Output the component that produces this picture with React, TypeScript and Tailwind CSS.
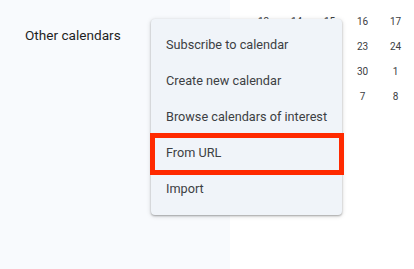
import React from "react";

const rows = [
  [6, 7, 8, 9, 10],
  [13, 14, 15, 16, 17],
  [20, 21, 22, 23, 24],
  [27, 28, 29, 30, 1],
  [4, 5, 6, 7, 8],
];

const items = [
  "Subscribe to calendar",
  "Create new calendar",
  "Browse calendars of interest",
  "From URL",
  "Import",
];

export default function App() {
  return (
    <div
      className="relative flex w-[414px] h-[269px] overflow-hidden bg-white"
      style={{ fontFamily: "Roboto, 'Noto Sans', sans-serif" }}
    >
      <aside className="w-[230px] h-full bg-[#f8fafd] pl-[25px] pt-[26px]">
        <div className="text-[13.6px] leading-[18px] font-normal text-[#1f1f1f]">Other calendars</div>
      </aside>
      <main className="flex-1 bg-white">
        <div className="mt-[-16px] ml-[17px] grid grid-cols-[repeat(5,33px)] auto-rows-[25px]">
          {rows.flat().map((n, i) => (
            <div
              key={i}
              className="flex items-center justify-center text-[10px] font-normal text-[#3c4043]"
            >
              {n}
            </div>
          ))}
        </div>
      </main>

      <div className="absolute left-[151px] top-[19px] w-[191px] rounded-[4px] bg-[#f0f4f9] py-[8px] shadow-[0_1px_2px_rgba(0,0,0,0.3),0_1px_4px_1px_rgba(0,0,0,0.1)]">
        {items.map((t) => (
          <div key={t} className="h-[36px] flex items-center pl-[15px] text-[12.7px] text-[#3c4043]">
            {t}
          </div>
        ))}
      </div>
      <div className="absolute left-[150px] top-[133px] w-[194px] h-[42px] border-[5px] border-[#ff2a00]" />
    </div>
  );
}
